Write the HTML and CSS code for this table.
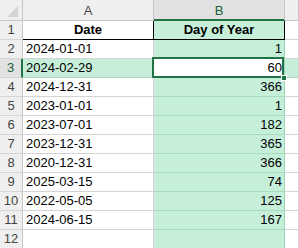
FILE: index.html
```html
<!DOCTYPE html>
<html>
<head>
<meta charset="utf-8">
<link rel="stylesheet" href="styles.css">
</head>
<body>
<div class="sheet">
  <div class="cell corner"><span class="tri"></span></div>
  <div class="cell ch">A</div>
  <div class="cell ch on">B</div>
  <div class="cell ch"></div>

  <div class="cell rh">1</div>
  <div class="cell a hdr">Date</div>
  <div class="cell b hdr">Day of Year</div>
  <div class="cell c"></div>

  <div class="cell rh">2</div>
  <div class="cell a">2024-01-01</div>
  <div class="cell b num">1</div>
  <div class="cell c"></div>

  <div class="cell rh on">3</div>
  <div class="cell a hl">2024-02-29</div>
  <div class="cell b num active">60</div>
  <div class="cell c hl"></div>

  <div class="cell rh">4</div>
  <div class="cell a">2024-12-31</div>
  <div class="cell b num">366</div>
  <div class="cell c"></div>

  <div class="cell rh">5</div>
  <div class="cell a">2023-01-01</div>
  <div class="cell b num">1</div>
  <div class="cell c"></div>

  <div class="cell rh">6</div>
  <div class="cell a">2023-07-01</div>
  <div class="cell b num">182</div>
  <div class="cell c"></div>

  <div class="cell rh">7</div>
  <div class="cell a">2023-12-31</div>
  <div class="cell b num">365</div>
  <div class="cell c"></div>

  <div class="cell rh">8</div>
  <div class="cell a">2020-12-31</div>
  <div class="cell b num">366</div>
  <div class="cell c"></div>

  <div class="cell rh">9</div>
  <div class="cell a">2025-03-15</div>
  <div class="cell b num">74</div>
  <div class="cell c"></div>

  <div class="cell rh">10</div>
  <div class="cell a">2022-05-05</div>
  <div class="cell b num">125</div>
  <div class="cell c"></div>

  <div class="cell rh">11</div>
  <div class="cell a">2024-06-15</div>
  <div class="cell b num">167</div>
  <div class="cell c"></div>

  <div class="cell rh">12</div>
  <div class="cell a"></div>
  <div class="cell b"></div>
  <div class="cell c"></div>

  <div class="selbox"></div>
  <div class="handle"></div>
</div>
</body>
</html>
```

FILE: styles.css
```css
html, body {
  margin: 0;
  background: #ffffff;
}

body {
  font-family: "Liberation Sans", Arial, sans-serif;
  font-size: 13px;
  color: #000;
}

.sheet {
  position: relative;
  display: grid;
  grid-template-columns: 23px 131px 131px 14px;
  grid-template-rows: 21px repeat(12, 19px);
  width: 299px;
  height: 248px;
  overflow: hidden;
}

.cell {
  box-sizing: border-box;
  border-right: 1px solid #d4d4d4;
  border-bottom: 1px solid #d4d4d4;
  line-height: 18px;
  white-space: nowrap;
  overflow: hidden;
}

.corner {
  position: relative;
  background: #efefef;
  border-right-color: #c6c6c6;
  border-bottom-color: #c6c6c6;
}

.tri {
  position: absolute;
  right: 4px;
  bottom: 3px;
  width: 0;
  height: 0;
  border-left: 11px solid transparent;
  border-bottom: 11px solid #d3d3d3;
}

.ch {
  background: #efefef;
  border-right-color: #c6c6c6;
  border-bottom-color: #c6c6c6;
  text-align: center;
  color: #444;
  padding-top: 2px;
}

.ch.on {
  background: #e1e1e1;
  color: #1b5e38;
  border-bottom: 2px solid #217346;
}

.rh {
  background: #efefef;
  border-right-color: #c6c6c6;
  border-bottom-color: #d4d4d4;
  text-align: center;
  color: #444;
}

.rh.on {
  background: #e1e1e1;
  color: #1b5e38;
  border-right: 2px solid #217346;
}

.a {
  padding-left: 3px;
}

.b {
  background: #c6efda;
  border-bottom-color: #abd9be;
  border-right-color: #9fd3b5;
}

.hl {
  background: #c6efda;
  border-bottom-color: #abd9be;
}

.num {
  text-align: right;
  padding-right: 2px;
}

.hdr {
  font-weight: bold;
  text-align: center;
  padding-left: 0;
  border-bottom-color: #000;
  border-right-color: #000;
}

.active {
  background: #ffffff;
}

.selbox {
  position: absolute;
  left: 152px;
  top: 57px;
  width: 132px;
  height: 21px;
  box-sizing: border-box;
  border: 2px solid #217346;
}

.handle {
  position: absolute;
  left: 281px;
  top: 75px;
  width: 6px;
  height: 6px;
  box-sizing: border-box;
  background: #217346;
  border: 1px solid #ffffff;
}
```
